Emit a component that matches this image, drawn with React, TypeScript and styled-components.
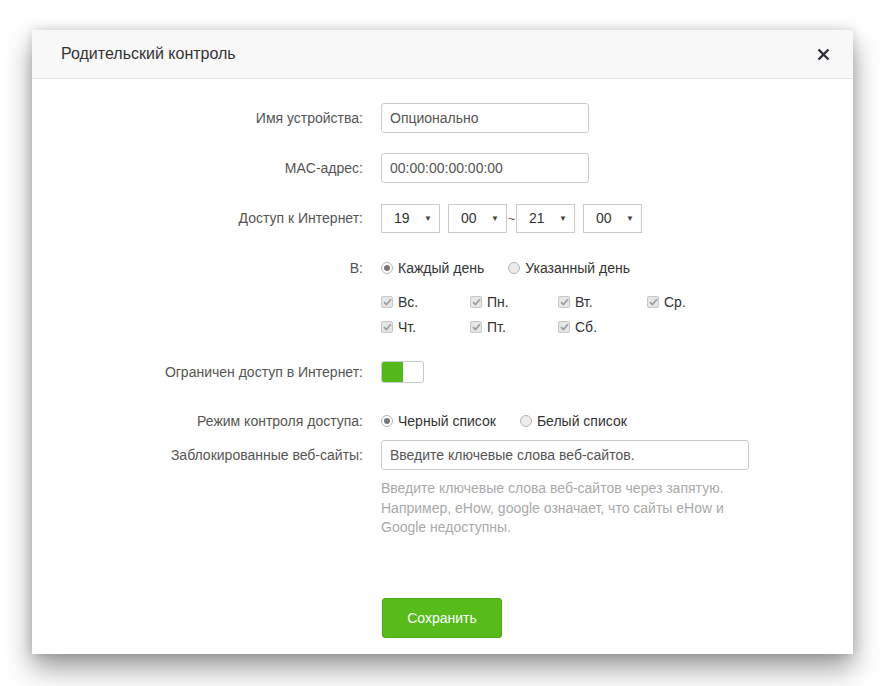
import React, { useState } from "react";
import styled, { createGlobalStyle } from "styled-components";

const Global = createGlobalStyle`
  html, body {
    margin: 0;
    padding: 0;
    background: #fff;
    font-family: "Liberation Sans", Arial, sans-serif;
  }
`;

const Page = styled.div`
  width: 886px;
  height: 686px;
  padding: 30px 0 0 32px;
  box-sizing: border-box;
`;

const Dialog = styled.div`
  width: 821px;
  background: #fff;
  box-shadow: 0 14px 26px rgba(0, 0, 0, 0.4), 0 0 10px rgba(0, 0, 0, 0.14);
`;

const Header = styled.div`
  height: 48px;
  background: #f8f8f8;
  border-bottom: 1px solid #e3e3e3;
  display: flex;
  align-items: center;
  justify-content: space-between;
  padding: 0 22px 0 29px;
`;

const Title = styled.div`
  font-size: 16px;
  color: #333;
`;

const Close = styled.button`
  border: 0;
  background: none;
  padding: 0;
  width: 16px;
  height: 16px;
  display: flex;
  align-items: center;
  justify-content: center;
  cursor: pointer;
`;

const Form = styled.div`
  display: flex;
  flex-direction: column;
  padding-bottom: 16px;
`;

const Row = styled.div<{ $top: number; $h: number }>`
  display: grid;
  grid-template-columns: 331px 1fr;
  column-gap: 18px;
  align-items: center;
  margin-top: ${(p) => p.$top}px;
  min-height: ${(p) => p.$h}px;
`;

const Label = styled.div`
  text-align: right;
  font-size: 14px;
  color: #555;
`;

const TextInput = styled.input<{ $w: number }>`
  width: ${(p) => p.$w}px;
  height: 30px;
  box-sizing: border-box;
  border: 1px solid #ccc;
  border-radius: 3px;
  padding: 0 8px;
  font-family: inherit;
  font-size: 14px;
  color: #555;
  outline: none;
  &::placeholder {
    color: #555;
  }
`;

const TimeGroup = styled.div`
  display: flex;
  align-items: center;
`;

const Select = styled.div<{ $gap: number }>`
  width: 59px;
  height: 29px;
  box-sizing: border-box;
  border: 1px solid #ccc;
  display: flex;
  align-items: center;
  justify-content: space-between;
  padding: 0 7px 0 12px;
  margin-right: ${(p) => p.$gap}px;
  font-size: 14px;
  color: #333;
`;

const Arrow = styled.span`
  font-size: 8px;
  color: #444;
`;

const Tilde = styled.span`
  font-size: 13px;
  color: #555;
  width: 9px;
  text-align: center;
`;

const RadioGroup = styled.div<{ $gap: number }>`
  display: flex;
  align-items: center;
  gap: ${(p) => p.$gap}px;
`;

const Option = styled.label`
  display: flex;
  align-items: center;
  gap: 5px;
  font-size: 14px;
  color: #333;
  cursor: pointer;
`;

const RadioDot = styled.span<{ $on: boolean }>`
  width: 12px;
  height: 12px;
  box-sizing: border-box;
  border-radius: 50%;
  border: 1px solid #b5b5b5;
  background: ${(p) => (p.$on ? "#fff" : "#ececec")};
  display: flex;
  align-items: center;
  justify-content: center;
  &::after {
    content: "";
    width: 6px;
    height: 6px;
    border-radius: 50%;
    background: #777;
    display: ${(p) => (p.$on ? "block" : "none")};
  }
`;

const Days = styled.div`
  display: grid;
  grid-template-columns: 89px 88px 89px 89px;
  grid-auto-rows: 25px;
  align-items: center;
`;

const CheckBox = styled.span`
  width: 12px;
  height: 12px;
  box-sizing: border-box;
  border: 1px solid #c8c8c8;
  border-radius: 2px;
  background: #e6e6e6;
  display: flex;
  align-items: center;
  justify-content: center;
`;

const Toggle = styled.button<{ $on: boolean }>`
  width: 43px;
  height: 22px;
  padding: 0;
  box-sizing: border-box;
  border: 1px solid #c9c9c9;
  border-radius: 3px;
  background: #fff;
  display: flex;
  overflow: hidden;
  cursor: pointer;
  &::before {
    content: "";
    width: 21px;
    height: 100%;
    background: ${(p) => (p.$on ? "#52b91b" : "transparent")};
  }
`;

const Hint = styled.div`
  font-size: 14px;
  line-height: 19.5px;
  color: #aaa;
  width: 356px;
`;

const SaveButton = styled.button`
  width: 120px;
  height: 40px;
  border: 1px solid #4ea916;
  border-radius: 3px;
  background: #57bb1c;
  color: #fff;
  font-family: inherit;
  font-size: 14px;
  cursor: pointer;
`;

const Tick = () => (
  <svg width="9" height="8" viewBox="0 0 9 8">
    <path d="M1 4.2 L3.4 6.5 L8 1.3" fill="none" stroke="#9a9a9a" strokeWidth="1.6" />
  </svg>
);

const days = ["Вс.", "Пн.", "Вт.", "Ср.", "Чт.", "Пт.", "Сб."];

export default function App() {
  const [everyDay, setEveryDay] = useState(true);
  const [black, setBlack] = useState(true);
  const [limit, setLimit] = useState(true);

  return (
    <Page>
      <Global />
      <Dialog>
        <Header>
          <Title>Родительский контроль</Title>
          <Close>
            <svg width="13" height="13" viewBox="0 0 13 13">
              <path d="M1.5 1.5 L11.5 11.5 M11.5 1.5 L1.5 11.5" stroke="#2d2d3d" strokeWidth="2.4" />
            </svg>
          </Close>
        </Header>
        <Form>
          <Row $top={24} $h={30}>
            <Label>Имя устройства:</Label>
            <div>
              <TextInput $w={208} placeholder="Опционально" />
            </div>
          </Row>
          <Row $top={20} $h={30}>
            <Label>MAC-адрес:</Label>
            <div>
              <TextInput $w={208} defaultValue="00:00:00:00:00:00" />
            </div>
          </Row>
          <Row $top={20} $h={30}>
            <Label>Доступ к Интернет:</Label>
            <TimeGroup>
              <Select $gap={8}>
                19 <Arrow>▼</Arrow>
              </Select>
              <Select $gap={0}>
                00 <Arrow>▼</Arrow>
              </Select>
              <Tilde>~</Tilde>
              <Select $gap={8}>
                21 <Arrow>▼</Arrow>
              </Select>
              <Select $gap={0}>
                00 <Arrow>▼</Arrow>
              </Select>
            </TimeGroup>
          </Row>
          <Row $top={25} $h={20}>
            <Label>В:</Label>
            <RadioGroup $gap={24}>
              <Option onClick={() => setEveryDay(true)}>
                <RadioDot $on={everyDay} />
                Каждый день
              </Option>
              <Option onClick={() => setEveryDay(false)}>
                <RadioDot $on={!everyDay} />
                Указанный день
              </Option>
            </RadioGroup>
          </Row>
          <Row $top={11} $h={50}>
            <div />
            <Days>
              {days.map((d) => (
                <Option key={d}>
                  <CheckBox>
                    <Tick />
                  </CheckBox>
                  {d}
                </Option>
              ))}
            </Days>
          </Row>
          <Row $top={22} $h={22}>
            <Label>Ограничен доступ в Интернет:</Label>
            <div>
              <Toggle $on={limit} onClick={() => setLimit(!limit)} />
            </div>
          </Row>
          <Row $top={28} $h={20}>
            <Label>Режим контроля доступа:</Label>
            <RadioGroup $gap={24}>
              <Option onClick={() => setBlack(true)}>
                <RadioDot $on={black} />
                Черный список
              </Option>
              <Option onClick={() => setBlack(false)}>
                <RadioDot $on={!black} />
                Белый список
              </Option>
            </RadioGroup>
          </Row>
          <Row $top={9} $h={30}>
            <Label>Заблокированные веб-сайты:</Label>
            <div>
              <TextInput $w={368} placeholder="Введите ключевые слова веб-сайтов." />
            </div>
          </Row>
          <Row $top={9} $h={59}>
            <div />
            <Hint>
              Введите ключевые слова веб-сайтов через запятую. Например, eHow, google означает, что сайты eHow и
              Google недоступны.
            </Hint>
          </Row>
          <Row $top={60} $h={40}>
            <div />
            <div style={{ paddingLeft: 1 }}>
              <SaveButton>Сохранить</SaveButton>
            </div>
          </Row>
        </Form>
      </Dialog>
    </Page>
  );
}
